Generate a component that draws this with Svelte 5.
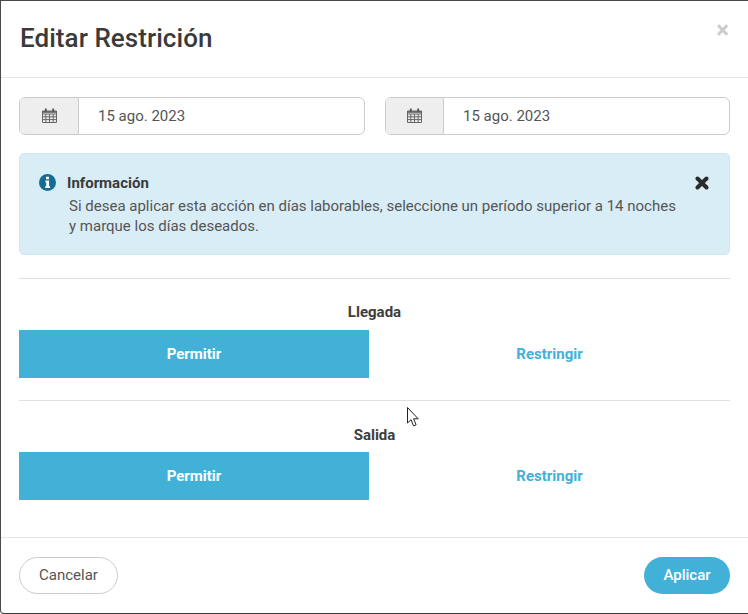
<script>
	let dates = ['15 ago. 2023', '15 ago. 2023'];
	let sections = ['Llegada', 'Salida'];
</script>

<div class="modal">
	<header class="modal-header">
		<h4>Editar Restrición</h4>
		<span class="close">×</span>
	</header>

	<div class="modal-body">
		<div class="dates">
			{#each dates as date}
				<div class="input-group">
					<span class="addon">
						<svg width="15" height="15" viewBox="0 0 15 15">
							<path fill="none" stroke="#666" stroke-width="1" d="M.5 3h14v11.5H.5zM.5 6h14M.5 8.8h14M.5 11.6h14M3.8 6v8.5M7.5 6v8.5M11.2 6v8.5" />
							<path fill="none" stroke="#555" stroke-width="1.8" d="M3.8 .5v3.5M11.2 .5v3.5" />
							<path fill="none" stroke="#555" stroke-width="1.4" d="M.5 4h14" />
						</svg>
					</span>
					<span class="value">{date}</span>
				</div>
			{/each}
		</div>

		<div class="alert">
			<svg class="info" width="17" height="17" viewBox="0 0 17 17">
				<circle cx="8.5" cy="8.5" r="8.5" fill="#146c94" />
				<path fill="#fff" d="M7 2.8h3v2.4H7zM6.4 6.6h3.7v5.6h1v1.8H6.2v-1.8h1v-3.8h-.8z" />
			</svg>
			<strong>Información</strong>
			<svg class="dismiss" width="14" height="14" viewBox="0 0 14 14">
				<path fill="none" stroke="#2b2b2b" stroke-width="4" stroke-linecap="round" d="M2.5 2.5l9 9M11.5 2.5l-9 9" />
			</svg>
			<p>Si desea aplicar esta acción en días laborables, seleccione un período superior a 14 noches y marque los días deseados.</p>
		</div>

		{#each sections as name}
			<section class="choice">
				<div class="choice-label">{name}</div>
				<div class="toggle">
					<span class="opt on">Permitir</span>
					<span class="opt">Restringir</span>
				</div>
			</section>
		{/each}
	</div>

	<footer class="modal-footer">
		<span class="btn cancel">Cancelar</span>
		<span class="btn apply">Aplicar</span>
	</footer>

	<svg class="cursor" width="13" height="21" viewBox="0 0 13 21">
		<path fill="#fff" stroke="#222" stroke-width="1" d="M.5.5v15.5l3.6-3.3 2.4 6.2 2.6-1.1-2.5-6h4.6z" />
	</svg>
</div>

<style>
	:global(body) {
		margin: 0;
		background: #fff;
	}

	.modal {
		position: relative;
		box-sizing: border-box;
		width: 748px;
		height: 614px;
		display: flex;
		flex-direction: column;
		background: #fff;
		border-top: 1px solid #4a4a4a;
		border-bottom: 1px solid #3a3a3a;
		border-left: 1px solid #4a4a4a;
		border-bottom-left-radius: 4px;
		font-family: Roboto, "Liberation Sans", sans-serif;
		color: #444;
		overflow: hidden;
	}

	.modal-header {
		height: 77px;
		flex: none;
		box-sizing: border-box;
		display: flex;
		justify-content: space-between;
		padding: 19px 19px 0 19px;
		border-bottom: 1px solid #e5e5e5;
	}

	h4 {
		margin: 0;
		font-size: 26px;
		font-weight: 500;
		line-height: 36px;
		letter-spacing: 0.05px;
		color: #3a3a3a;
	}

	.close {
		margin-top: -1px;
		font-size: 24px;
		font-weight: 700;
		line-height: 22px;
		color: #ccc;
	}

	.modal-body {
		flex: 1;
		padding: 19px 18px 0 18px;
	}

	.dates {
		display: flex;
		gap: 20px;
	}

	.input-group {
		width: 346px;
		flex: none;
		height: 38px;
		box-sizing: border-box;
		display: flex;
		align-items: center;
		border: 1px solid #ccc;
		border-radius: 6px;
		overflow: hidden;
		font-size: 15px;
		color: #555;
	}

	.input-group:last-child {
		width: 345px;
	}

	.addon {
		width: 58px;
		height: 100%;
		flex: none;
		display: flex;
		align-items: center;
		justify-content: center;
		background: #eee;
		border-right: 1px solid #ccc;
	}

	.input-group:last-child .addon {
		width: 57px;
	}

	.addon svg {
		margin-top: -2px;
	}

	.value {
		padding-left: 19px;
	}

	.alert {
		position: relative;
		box-sizing: border-box;
		height: 102px;
		margin-top: 18px;
		padding: 20px 48px 0 49px;
		background: #d9edf7;
		border: 1px solid #cfe6f0;
		border-radius: 5px;
	}

	.info {
		position: absolute;
		left: 19px;
		top: 20px;
	}

	.dismiss {
		position: absolute;
		right: 20px;
		top: 22px;
	}

	.alert strong {
		display: block;
		margin-left: -2px;
		font-size: 15px;
		font-weight: 700;
		line-height: 18px;
		color: #3a3a3a;
	}

	.alert p {
		margin: 4px 0 0;
		font-size: 15px;
		line-height: 20px;
		color: #555;
	}

	.choice {
		height: 122px;
		box-sizing: border-box;
		border-top: 1px solid #e0e0e0;
	}

	.alert + .choice {
		margin-top: 23px;
	}

	.choice-label {
		padding-top: 25px;
		height: 51px;
		box-sizing: border-box;
		text-align: center;
		font-size: 15px;
		font-weight: 700;
		line-height: 17px;
		color: #3d3d3d;
	}

	.choice:last-child .choice-label {
		padding-top: 26px;
	}

	.toggle {
		display: flex;
		height: 48px;
		font-size: 15px;
		font-weight: 700;
	}

	.opt {
		flex: 1;
		display: flex;
		align-items: center;
		justify-content: center;
		color: #42b1d8;
	}

	.opt.on {
		flex: none;
		width: 350px;
		background: #42b1d8;
		color: #fff;
	}

	.modal-footer {
		height: 76px;
		flex: none;
		box-sizing: border-box;
		display: flex;
		justify-content: space-between;
		padding: 19px 18px 0 18px;
		border-top: 1px solid #e5e5e5;
	}

	.btn {
		height: 37px;
		box-sizing: border-box;
		display: flex;
		align-items: center;
		justify-content: center;
		padding-bottom: 2px;
		border-radius: 19px;
		font-size: 15px;
	}

	.cancel {
		width: 99px;
		border: 1px solid #ccc;
		color: #555;
	}

	.apply {
		width: 86px;
		background: #42b1d8;
		color: #fff;
		font-weight: 500;
	}

	.cursor {
		position: absolute;
		left: 406px;
		top: 406px;
	}
</style>
